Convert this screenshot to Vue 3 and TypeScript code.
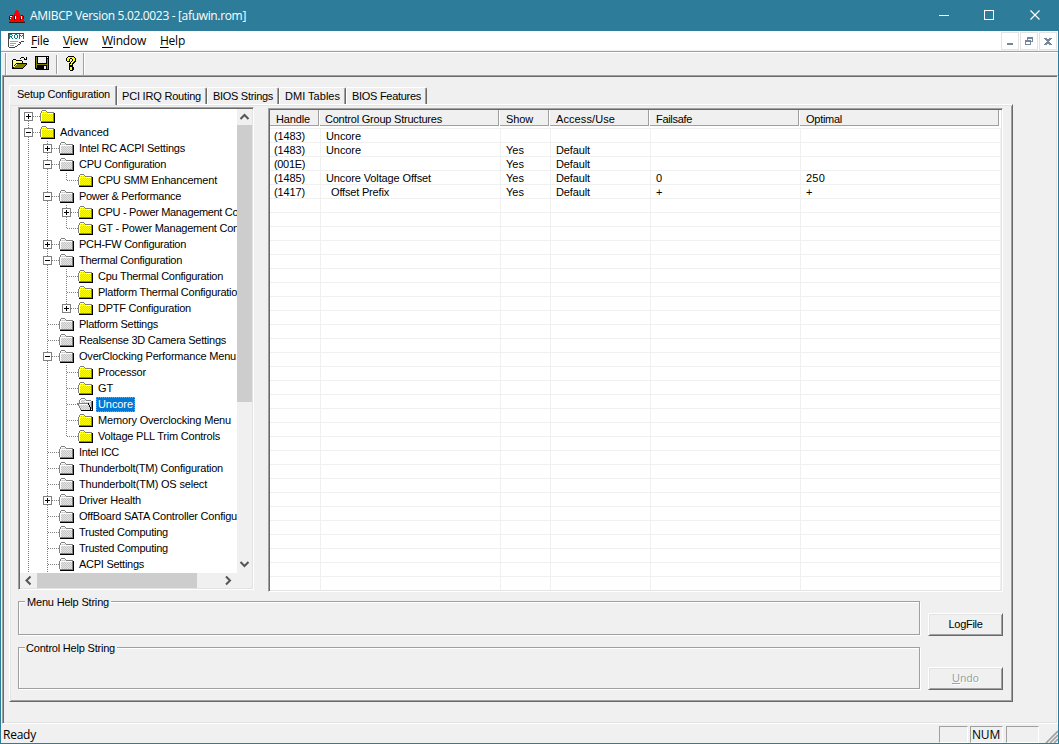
<script setup lang="ts">
interface TreeRow {
  level: number
  text: string
  w: number
  box?: '+' | '-'
  last?: boolean
  selected?: boolean
  guides: number[]
}

// Spreads the letters of a label so that it occupies the given pixel width.
const vFit = {
  mounted(el: HTMLElement, binding: { value: number }) {
    const count = (el.textContent ?? '').length
    if (!binding.value || !count) return
    const natural = el.getBoundingClientRect().width
    el.style.letterSpacing = `${(binding.value - natural) / count}px`
  },
}

const tabs = [
  { text: 'Setup Configuration', w: 93 },
  { text: 'PCI IRQ Routing', w: 79 },
  { text: 'BIOS Strings', w: 60 },
  { text: 'DMI Tables', w: 55 },
  { text: 'BIOS Features', w: 69 },
]

const menus = [
  { key: 'F', rest: 'ile', w: 18 },
  { key: 'V', rest: 'iew', w: 25 },
  { key: 'W', rest: 'indow', w: 44 },
  { key: 'H', rest: 'elp', w: 25 },
]

const tree: TreeRow[] = [
  { level: 0, text: '', w: 0, box: '+', guides: [] },
  { level: 0, text: 'Advanced', w: 49, box: '-', guides: [] },
  { level: 1, text: 'Intel RC ACPI Settings', w: 106, box: '+', guides: [0] },
  { level: 1, text: 'CPU Configuration', w: 87, box: '-', guides: [0] },
  { level: 2, text: 'CPU SMM Enhancement', w: 119, last: true, guides: [0, 1] },
  { level: 1, text: 'Power & Performance', w: 102, box: '-', guides: [0] },
  { level: 2, text: 'CPU - Power Management Con', w: 146, box: '+', guides: [0, 1] },
  { level: 2, text: 'GT - Power Management Con', w: 141, last: true, guides: [0, 1] },
  { level: 1, text: 'PCH-FW Configuration', w: 107, box: '+', guides: [0] },
  { level: 1, text: 'Thermal Configuration', w: 103, box: '-', guides: [0] },
  { level: 2, text: 'Cpu Thermal Configuration', w: 125, guides: [0, 1] },
  { level: 2, text: 'Platform Thermal Configuration', w: 145, guides: [0, 1] },
  { level: 2, text: 'DPTF Configuration', w: 93, box: '+', last: true, guides: [0, 1] },
  { level: 1, text: 'Platform Settings', w: 79, guides: [0] },
  { level: 1, text: 'Realsense 3D Camera Settings', w: 147, guides: [0] },
  { level: 1, text: 'OverClocking Performance Menu', w: 157, box: '-', guides: [0] },
  { level: 2, text: 'Processor', w: 48, guides: [0, 1] },
  { level: 2, text: 'GT', w: 15, guides: [0, 1] },
  { level: 2, text: 'Uncore', w: 35, selected: true, guides: [0, 1] },
  { level: 2, text: 'Memory Overclocking Menu', w: 133, guides: [0, 1] },
  { level: 2, text: 'Voltage PLL Trim Controls', w: 122, last: true, guides: [0, 1] },
  { level: 1, text: 'Intel ICC', w: 40, guides: [0] },
  { level: 1, text: 'Thunderbolt(TM) Configuration', w: 144, guides: [0] },
  { level: 1, text: 'Thunderbolt(TM) OS select', w: 128, guides: [0] },
  { level: 1, text: 'Driver Health', w: 62, box: '+', guides: [0] },
  { level: 1, text: 'OffBoard SATA Controller Configu', w: 158, guides: [0] },
  { level: 1, text: 'Trusted Computing', w: 89, guides: [0] },
  { level: 1, text: 'Trusted Computing', w: 89, guides: [0] },
  { level: 1, text: 'ACPI Settings', w: 65, guides: [0] },
]

const headers = [
  { text: 'Handle', w: 34 },
  { text: 'Control Group Structures', w: 117 },
  { text: 'Show', w: 27 },
  { text: 'Access/Use', w: 59 },
  { text: 'Failsafe', w: 36 },
  { text: 'Optimal', w: 36 },
]

const cellWidths: Record<string, number> = {
  Uncore: 35,
  Yes: 18,
  Default: 34,
  'Uncore Voltage Offset': 105,
  'Offset Prefix': 58,
  '250': 19,
}

const filled: string[][] = [
  ['(1483)', 'Uncore', '', '', '', ''],
  ['(1483)', 'Uncore', 'Yes', 'Default', '', ''],
  ['(001E)', '', 'Yes', 'Default', '', ''],
  ['(1485)', 'Uncore Voltage Offset', 'Yes', 'Default', '0', '250'],
  ['(1417)', 'Offset Prefix', 'Yes', 'Default', '+', '+'],
]
const rows: string[][] = [...filled, ...Array.from({ length: 28 }, () => ['', '', '', '', '', ''])]

const boxX = (row: TreeRow) => 8.5 + row.level * 19
</script>

<template>
  <div class="window">
    <header class="titlebar">
      <svg class="app-icon" width="16" height="14" viewBox="0 0 16 14" shape-rendering="crispEdges">
        <path d="M7 1h2v1h1v2h1v2h3v1h1v5h1v1H0v-1h1V7h1V6h3V4h1V2h1z" fill="#f00" />
        <path d="M1 6h3v1H1zM0 7h1v4H0zM5 6h1v5H5zM8 7h1v1H8zM8 10h1v1H8zM12 6h2v1h-2zM14 7h1v3h-1zM11 8h1v3h-1zM0 13h16v1H0z" fill="#222" />
        <path d="M1 7h2v1H1zM1 9h1v1H1zM6 7h1v3H6zM12 7h1v3h-1z" fill="#fff" />
      </svg>
      <span v-fit="216" class="title">AMIBCP Version 5.02.0023 - [afuwin.rom]</span>
      <svg class="caption" width="102" height="12" viewBox="0 0 102 12" fill="none" stroke="#fff">
        <path d="M0 6.5h10M45.500 1.500h9v9h-9z" shape-rendering="crispEdges" />
        <path d="M91.500 1.500l9 9M100.500 1.500l-9 9" stroke-width="1.2" />
      </svg>
    </header>

    <nav class="menubar">
      <svg class="rom-icon" width="17" height="16" viewBox="0 0 17 16" shape-rendering="crispEdges">
        <path d="M0 0h17v8h-2v3h-2v2h-2v2H0z" fill="#fff" />
        <path d="M0 0h16v1H0zM0 0h1v14H0zM1 14h6v1H1zM7 13h2v1H7zM9 12h1v1H9zM10 11h2v1h-2zM12 9h1v2h-1zM13 8h3v1h-3zM11 9h1v1h-1z" fill="#444" />
        <path d="M1 1h3v1H2v1h2v1H2v2H1zM4 2h1v1H4zM3 4h1v1H3zM4 5h1v1H4zM7 1h2v1H7zM6 2h1v3H6zM9 2h1v3H9zM7 5h2v1H7zM11 1h1v5h-1zM15 1h1v5h-1zM12 2h1v1h-1zM14 2h1v1h-1zM13 3h1v1h-1z" fill="#008080" />
        <path d="M2 8h8v1H2zM2 10h6v1H2zM2 12h4v1H2z" fill="#a0a0a0" />
      </svg>
      <span v-for="m in menus" :key="m.key" v-fit="m.w" class="menu"><u>{{ m.key }}</u>{{ m.rest }}</span>
      <div class="mdi-buttons">
        <span class="mdi"><svg width="8" height="8" viewBox="0 0 8 8"><path d="M1 6h6v2H1z" fill="#76879b" /></svg></span>
        <span class="mdi"><svg width="8" height="8" viewBox="0 0 8 8" shape-rendering="crispEdges"><path d="M2 0h6v5H6V4h1V2H3v1H2zM0 3h6v5H0zM1 5v2h4V5z" fill="#76879b" fill-rule="evenodd" /></svg></span>
        <span class="mdi"><svg width="8" height="8" viewBox="0 0 8 8" shape-rendering="crispEdges"><path d="M0 1h3v1h2V1h3v1H7v1H6v1H5v1h1v1h1v1h1v1H5V7H3v1H0V7h1V6h1V5h1V4H2V3H1V2H0z" fill="#76879b" /></svg></span>
      </div>
    </nav>

    <div class="toolbar">
      <div class="tool-group">
        <svg class="tool-open" width="16" height="14" viewBox="0 0 16 14" shape-rendering="crispEdges">
          <path d="M1 5h3v1h6v2H4v1H3v2H2v1H1z" fill="#ffff60" />
          <path d="M5 8h10v1h-1v1h-1v1h-1v1h-1v1H1v-1h1v-1h1v-1h1V9h1z" fill="#808000" />
          <path d="M1 3h3v1H1zM0 4h1v9H0zM4 4h6v1H4zM10 5h1v2h-1zM4 7h11v1H4zM3 8h1v1H3zM2 9h1v1H2zM1 11h1v1H1zM14 8h1v1h-1zM13 9h1v1h-1zM12 10h1v1h-1zM11 11h1v1h-1zM0 12h11v1H0zM9 1h3v1H9zM8 2h1v1H8zM12 2h1v1h-1zM14 1h1v3h-3V3h2z" fill="#000" />
        </svg>
        <svg class="tool-save" width="14" height="14" viewBox="0 0 14 14" shape-rendering="crispEdges">
          <path d="M0 0h14v14H1v-1H0z" fill="#000" />
          <path d="M1 1h1v7h10V3h1v10h-1V9H2v3H1z" fill="#808000" />
          <path d="M3 1h8v6H3zM12 1h1v1h-1zM9 10h2v3H9z" fill="#f0f0f0" />
        </svg>
        <i class="tool-sep"></i>
        <svg class="tool-help" width="10" height="15" viewBox="0 0 10 15" shape-rendering="crispEdges">
          <path d="M2 0h6v1h1v1h1v4H9v1H8v1H7v2H3V7h1V6h1V5h1V3H4v3H1V5H0V2h1V1h1zM3 10h4v1h1v3H7v1H4v-1H3z" fill="#000" />
          <path d="M2 1h6v1h1v3H8v1H7v1H6v2H4V8h1V6h1V5h1V3H6V2H4v1H3v2H1V2h1zM4 11h2v3H4z" fill="#ff0" />
        </svg>
      </div>
    </div>

    <main class="client">
      <div class="tabs">
        <div v-for="(t, i) in tabs" :key="t.text" class="tab" :class="['tab' + i, { active: i === 0 }]"><span v-fit="t.w">{{ t.text }}</span></div>
      </div>
      <section class="page">
        <div class="panes">
          <div class="tree">
            <div class="tree-main">
              <div class="tree-rows">
                <div v-for="(row, i) in tree" :key="i" class="tree-row">
                  <svg class="branch" :width="40 + row.level * 19" height="16" :viewBox="`0 0 ${40 + row.level * 19} 16`" shape-rendering="crispEdges">
                    <defs>
                      <pattern id="dither" width="2" height="2" patternUnits="userSpaceOnUse">
                        <path d="M0 0h2v2H0z" fill="#ff0" />
                        <path d="M1 0h1v1H1zM0 1h1v1H0z" fill="#c8c8c8" />
                      </pattern>
                    </defs>
                    <g fill="none" stroke="#808080" stroke-dasharray="1 1">
                      <path v-for="g in row.guides" :key="g" :d="`M${8.5 + g * 19} 0V16`" />
                      <path :d="`M${boxX(row)} ${i === 0 ? 8 : 0}V${row.last ? 8 : 16}`" />
                      <path :d="`M${boxX(row) + 0.5} 7.500h12`" />
                    </g>
                    <g v-if="row.box" fill="none" :transform="`translate(${boxX(row) - 4.5} 3)`">
                      <path d="M.5.5h8v8h-8z" fill="#fff" stroke="#808080" />
                      <path :d="row.box === '+' ? 'M2 4.500h5M4.500 2v5' : 'M2 4.500h5'" stroke="#000" />
                    </g>
                    <g v-if="!row.selected" :transform="`translate(${20 + row.level * 19} 1)`">
                      <path d="M1 3h1V1h5v2h7v9H1z" fill="url(#dither)" />
                      <path d="M1 3h1v8H1zM2 1h4v1H2zM2 3h11v1H2z" fill="#fff" />
                      <path d="M0 3h1v8H0zM1 2h1v1H1zM1 1h1v1H1zM2 0h4v1H2zM6 1h1v1H6zM7 2h6v1H7zM13 2h1v10h-1zM1 11h12v1H1z" fill="#808080" />
                      <path d="M14 3h1v10H1v-1h13z" fill="#000" />
                    </g>
                    <g v-else :transform="`translate(${19 + row.level * 19} 1)`">
                      <path d="M2 2h1V1h5v1h6v9H3z" fill="url(#dither)" />
                      <path d="M1 5h10v2h1v2h1v2h1v1H4v-1H3V9H2V7H1z" fill="url(#dither)" />
                      <path d="M3 2h1v3H3zM4 1h4v1H4zM8 3h6v1H8zM1 6h10v1H1z" fill="#fff" />
                      <path d="M0 5h11v1H0zM1 6h1v2H1zM2 8h1v2H2zM3 10h1v2H3zM3 1h1v1H3zM2 2h1v3H2zM4 0h4v1H4zM8 1h1v1H8zM9 2h5v1H9zM14 3h1v8h-1z" fill="#808080" />
                      <path d="M11 5h1v2h-1zM12 7h1v2h-1zM13 9h1v3h-1zM15 3h1v10H4v-1h11z" fill="#000" />
                    </g>
                  </svg>
                  <span v-if="row.text" class="label" :class="{ selected: row.selected }"><span v-fit="row.w">{{ row.text }}</span></span>
                </div>
              </div>
              <div class="vbar">
                <svg width="15" height="16" viewBox="0 0 15 16"><path d="M3.500 10l4-4 4 4" fill="none" stroke="#555" stroke-width="2" /></svg>
                <div class="vthumb"></div>
                <svg class="down" width="15" height="16" viewBox="0 0 15 16"><path d="M3.500 5l4 4 4-4" fill="none" stroke="#555" stroke-width="2" /></svg>
              </div>
            </div>
            <div class="hbar">
              <svg width="17" height="15" viewBox="0 0 17 15"><path d="M10.500 3.500l-4 4 4 4" fill="none" stroke="#555" stroke-width="2" /></svg>
              <div class="hthumb"></div>
              <svg class="right" width="17" height="15" viewBox="0 0 17 15"><path d="M6 3.500l4 4-4 4" fill="none" stroke="#555" stroke-width="2" /></svg>
            </div>
          </div>

          <div class="list">
            <div class="list-head">
              <div v-for="h in headers" :key="h.text" class="th"><span v-fit="h.w">{{ h.text }}</span></div>
            </div>
            <div class="list-body">
              <div v-for="(r, i) in rows" :key="i" class="tr">
                <div v-for="(c, j) in r" :key="j" class="td" :class="{ indent: c === 'Offset Prefix' }"><span v-if="c" v-fit="j === 0 ? 31 : cellWidths[c] ?? 0">{{ c }}</span></div>
              </div>
            </div>
          </div>
        </div>

        <div class="help-row first">
          <fieldset class="group"><span class="legend"><span v-fit="82">Menu Help String</span></span></fieldset>
          <button class="btn"><span v-fit="34">LogFile</span></button>
        </div>
        <div class="help-row second">
          <fieldset class="group"><span class="legend wide"><span v-fit="89">Control Help String</span></span></fieldset>
          <button class="btn" disabled><span v-fit="27"><u>U</u>ndo</span></button>
        </div>
      </section>
    </main>

    <footer class="status">
      <span v-fit="33" class="ready">Ready</span>
      <span class="cell c1"></span>
      <span class="cell c2"><span v-fit="28">NUM</span></span>
      <span class="cell c3"></span>
      <svg class="grip" width="14" height="14" viewBox="0 0 14 14"><path d="M2 14L14 2M6 14l8-8M10 14l4-4" stroke="#a0a0a0" stroke-width="1.700" /></svg>
    </footer>
  </div>
</template>

<style>
body {
  margin: 0;
  overflow: hidden;
}
</style>

<style scoped>
* {
  box-sizing: border-box;
}
.window {
  width: 1059px;
  height: 744px;
  display: flex;
  flex-direction: column;
  background: #f0f0f0;
  border: 1px solid #2d7d9a;
  border-top: 0;
  font: 11px/14px "Liberation Sans", Arial, sans-serif;
  color: #000;
  white-space: nowrap;
  cursor: default;
}
.window span[style] {
  display: inline-block;
}
.titlebar {
  height: 31px;
  flex: none;
  display: flex;
  align-items: center;
  background: #2d7d9a;
  color: #fff;
  padding-left: 8px;
  margin: 0 -1px 0 0;
}
.title {
  margin-left: 5px;
  font: 12px/16px "Open Sans", "Noto Sans", sans-serif;
}
.caption {
  margin-left: auto;
  margin-right: 18px;
  margin-top: -2px;
}
.menubar {
  height: 19px;
  flex: none;
  display: flex;
  align-items: center;
  background: #fff;
  padding-left: 7px;
  font: 12px/16px "Open Sans", "Noto Sans", sans-serif;
}
.rom-icon {
  margin-right: 6px;
}
.menu {
  margin-right: 14px;
}
.menu u {
  text-underline-offset: 2px;
}
.mdi-buttons {
  margin-left: auto;
  display: flex;
  gap: 1px;
  align-self: flex-start;
  padding: 1px 1px 0 0;
}
.mdi {
  width: 18px;
  height: 18px;
  border: 1px solid #e3e3e3;
  display: flex;
  align-items: center;
  justify-content: center;
}
.toolbar {
  height: 25px;
  flex: none;
  border-top: 1px solid #a0a0a0;
  box-shadow: inset 0 1px #fff;
  margin-top: 1px;
}
.tool-group {
  margin: 1px 0 0 4px;
  width: 79px;
  height: 22px;
  border-left: 1px solid #a0a0a0;
  border-right: 1px solid #a0a0a0;
  box-shadow: inset 1px 0 #fff, 1px 0 #fff;
  display: flex;
  align-items: center;
  padding: 0 0 2px 6px;
}
.tool-save {
  margin-left: 7px;
}
.tool-sep {
  width: 2px;
  height: 19px;
  margin: 2px 8px 0 7px;
  border-left: 1px solid #a0a0a0;
  border-right: 1px solid #fff;
}
.client {
  height: 649px;
  flex: none;
  border-style: solid;
  border-width: 1px;
  border-color: #a0a0a0 #fff #fff #a0a0a0;
  margin-left: 1px;
  box-shadow: inset 1px 1px #696969, inset -1px -1px #e3e3e3;
  margin-top: -1px;
  padding: 9px 0 0 6px;
}
.tabs {
  height: 19px;
  display: flex;
  align-items: flex-end;
}
.tab {
  height: 17px;
  padding: 1px 0 0 4px;
  border-top: 1px solid #fff;
  border-left: 1px solid #fff;
  border-right: 1px solid #696969;
  border-radius: 2px 2px 0 0;
  box-shadow: inset -1px 0 #a0a0a0;
}
.tab.active {
  height: 20px;
  padding: 1px 0 0 7px;
  margin-bottom: -1px;
  background: #f0f0f0;
  z-index: 1;
}
.tab0 { width: 108px; }
.tab1 { width: 90px; }
.tab2 { width: 72px; padding-left: 5px; }
.tab3 { width: 67px; padding-left: 5px; }
.tab4 { width: 81px; padding-left: 5px; }
.page {
  width: 1004px;
  height: 598px;
  border-style: solid;
  border-width: 1px;
  border-color: #fff #696969 #696969 #fff;
  box-shadow: inset 1px 1px #e3e3e3, inset -1px -1px #a0a0a0;
  padding: 2px 0 0 8px;
}
.panes {
  display: flex;
  gap: 14px;
}
.tree {
  width: 236px;
  height: 483px;
  border-style: solid;
  border-width: 1px;
  border-color: #a0a0a0 #fff #fff #a0a0a0;
  background: #fff;
  padding: 1px;
  box-shadow: inset 1px 1px #696969, inset -1px -1px #e3e3e3;
}
.tree-main {
  display: flex;
  height: 464px;
}
.tree-rows {
  width: 217px;
  overflow: hidden;
}
.tree-row {
  height: 16px;
  display: flex;
}
.branch {
  display: block;
  flex: none;
  margin-right: -3px;
}
.label {
  height: 15px;
  margin-left: 1px;
  padding: 0 2px;
  line-height: 15px;
}
.label.selected {
  background: #0078d7;
  color: #fff;
  outline: 1px dotted #ff8728;
  outline-offset: -1px;
}
.vbar {
  width: 15px;
  background: #f0f0f0;
  display: flex;
  flex-direction: column;
}
.vbar svg,
.hbar svg {
  display: block;
  flex: none;
}
.vthumb {
  height: 277px;
  background: #cdcdcd;
}
.down {
  margin-top: auto;
}
.hbar {
  height: 15px;
  background: #f0f0f0;
  display: flex;
}
.hthumb {
  width: 160px;
  background: #cdcdcd;
}
.right {
  margin-left: 23px;
}
.list {
  width: 735px;
  height: 484px;
  margin-top: 1px;
  border-style: solid;
  border-width: 1px;
  border-color: #a0a0a0 #fff #fff #a0a0a0;
  background: #fff;
  padding: 1px;
  overflow: hidden;
  box-shadow: inset 1px 1px #696969, inset -1px -1px #e3e3e3;
}
.list-head,
.tr {
  display: grid;
  grid-template-columns: 50px 180px 50px 100px 150px 200px;
}
.th {
  height: 17px;
  background: #f0f0f0;
  padding: 2px 0 0 6px;
  border-bottom: 1px solid #fff;
  box-shadow: inset -1px -1px #a0a0a0;
  border-right: 1px solid #fff;
}
.th:nth-child(2) {
  padding-left: 5px;
}
.list-body {
  margin-top: 1px;
}
.tr {
  height: 14px;
}
.td {
  height: 14px;
  border-top: 1px solid #f0f0f0;
  border-left: 1px solid #f0f0f0;
  padding-left: 5px;
  line-height: 14px;
}
.td:first-child {
  border-left: 0;
  padding-left: 4px;
}
.td:last-child {
  width: 201px;
  border-right: 1px solid #f0f0f0;
}
.td.indent {
  padding-left: 10px;
}
.help-row {
  display: flex;
  justify-content: space-between;
  width: 985px;
}
.help-row.first {
  margin-top: 9px;
  height: 46px;
}
.group {
  width: 902px;
  height: 34px;
  margin: 0;
  padding: 0;
  border: 1px solid #a0a0a0;
  box-shadow: inset 1px 1px #fff, 1px 1px #fff;
}
.second .group {
  height: 42px;
}
.legend {
  display: block;
  width: 86px;
  margin: -7px 0 0 6px;
  padding-left: 2px;
  background: #f0f0f0;
}
.legend.wide {
  width: 92px;
  padding-left: 1px;
}
.btn {
  width: 75px;
  height: 23px;
  margin-top: 12px;
  padding: 0 0 1px;
  font: inherit;
  color: #000;
  background: #f0f0f0;
  border-style: solid;
  border-width: 1px;
  border-color: #fff #696969 #696969 #fff;
  box-shadow: inset 1px 1px #e3e3e3, inset -1px -1px #a0a0a0;
}
.second .btn {
  margin-top: 20px;
}
.btn:disabled {
  color: #a0a0a0;
  text-shadow: 1px 1px #fff;
}
.status {
  flex: 1;
  display: flex;
  align-items: flex-start;
  padding: 2px 0 0 2px;
  font: 12px/17px "Open Sans", "Noto Sans", sans-serif;
}
.ready {
  margin-right: auto;
}
.cell {
  height: 17px;
  border-style: solid;
  border-width: 1px;
  border-color: #a0a0a0 #fff #fff #a0a0a0;
}
.c1 { width: 29px; }
.c2 { width: 33px; margin: 0 3px 0 2px; padding-left: 1px; line-height: 16px; }
.c3 { width: 33px; }
.grip {
  margin: 3px 0 0 5px;
}
</style>
